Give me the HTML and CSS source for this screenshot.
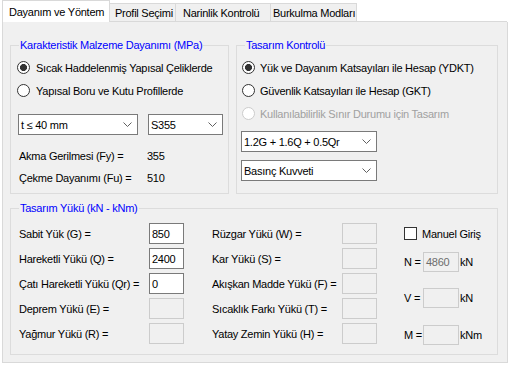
FILE: index.html
```html
<!DOCTYPE html>
<html lang="tr">
<head>
<meta charset="utf-8">
<link rel="stylesheet" href="styles.css">
</head>
<body>
<div class="tabs">
  <div class="tab active">Dayanım ve Yöntem</div>
  <div class="tab t2">Profil Seçimi</div>
  <div class="tab t3">Narinlik Kontrolü</div>
  <div class="tab t4">Burkulma Modları</div>
  <div class="tab-fill"></div>
</div>
<div class="page">
  <div class="top">
    <fieldset class="group g1">
      <legend>Karakteristik Malzeme Dayanımı (MPa)</legend>
      <div class="radios">
        <div class="opt"><span class="radio on"></span>Sıcak Haddelenmiş Yapısal Çeliklerde</div>
        <div class="opt"><span class="radio"></span>Yapısal Boru ve Kutu Profillerde</div>
      </div>
      <div class="combos">
        <div class="combo c-thick">t ≤ 40 mm<svg width="9" height="5" viewBox="0 0 9 5"><path d="M0.5 0.5 L4.5 4.5 L8.5 0.5" fill="none" stroke="#606060"/></svg></div>
        <div class="combo c-steel">S355<svg width="9" height="5" viewBox="0 0 9 5"><path d="M0.5 0.5 L4.5 4.5 L8.5 0.5" fill="none" stroke="#606060"/></svg></div>
      </div>
      <div class="props">
        <span>Akma Gerilmesi (Fy) =</span><span>355</span>
        <span>Çekme Dayanımı (Fu) =</span><span>510</span>
      </div>
    </fieldset>
    <fieldset class="group g2">
      <legend>Tasarım Kontrolü</legend>
      <div class="radios">
        <div class="opt"><span class="radio on"></span>Yük ve Dayanım Katsayıları ile Hesap (YDKT)</div>
        <div class="opt"><span class="radio"></span>Güvenlik Katsayıları ile Hesap (GKT)</div>
        <div class="opt disabled"><span class="radio"></span>Kullanılabilirlik Sınır Durumu için Tasarım</div>
      </div>
      <div class="combo c-combo">1.2G + 1.6Q + 0.5Qr<svg width="9" height="5" viewBox="0 0 9 5"><path d="M0.5 0.5 L4.5 4.5 L8.5 0.5" fill="none" stroke="#606060"/></svg></div>
      <div class="combo c-force">Basınç Kuvveti<svg width="9" height="5" viewBox="0 0 9 5"><path d="M0.5 0.5 L4.5 4.5 L8.5 0.5" fill="none" stroke="#606060"/></svg></div>
    </fieldset>
  </div>
  <fieldset class="group g3">
    <legend>Tasarım Yükü (kN - kNm)</legend>
    <div class="loads">
      <div class="load-grid">
        <span class="lbl">Sabit Yük (G) =</span><div class="field">850</div>
        <span class="lbl">Hareketli Yükü (Q) =</span><div class="field">2400</div>
        <span class="lbl">Çatı Hareketli Yükü (Qr) =</span><div class="field">0</div>
        <span class="lbl">Deprem Yükü (E) =</span><div class="field off"></div>
        <span class="lbl">Yağmur Yükü (R) =</span><div class="field off"></div>
      </div>
      <div class="load-grid col2">
        <span class="lbl">Rüzgar Yükü (W) =</span><div class="field off"></div>
        <span class="lbl">Kar Yükü (S) =</span><div class="field off"></div>
        <span class="lbl">Akışkan Madde Yükü (F) =</span><div class="field off"></div>
        <span class="lbl">Sıcaklık Farkı Yükü (T) =</span><div class="field off"></div>
        <span class="lbl">Yatay Zemin Yükü (H) =</span><div class="field off"></div>
      </div>
      <div class="forces">
        <div class="manual"><span class="check"></span>Manuel Giriş</div>
        <div class="force f-n"><span>N =</span><div class="field off sm grey">4860</div><span class="unit">kN</span></div>
        <div class="force f-v"><span>V =</span><div class="field off sm"></div><span class="unit">kN</span></div>
        <div class="force f-m"><span>M =</span><div class="field off sm"></div><span class="unit">kNm</span></div>
      </div>
    </div>
  </fieldset>
</div>
</body>
</html>
```

FILE: styles.css
```css
* { box-sizing: border-box; }

html, body {
  margin: 0;
  padding: 0;
  background: #ffffff;
}

body {
  width: 510px;
  height: 366px;
  overflow: hidden;
  font-family: "Liberation Sans", Arial, sans-serif;
  font-size: 11px;
  letter-spacing: -0.25px;
  color: #000000;
}

/* ---------- tabs ---------- */
.tabs {
  display: flex;
  align-items: flex-end;
  height: 22px;
  margin: 0 3px 0 2px;
}

.tab {
  height: 19px;
  line-height: 18px;
  padding: 0 0 0 5px;
  background: #f0f0f0;
  border: 1px solid #d9d9d9;
  border-left: none;
  white-space: nowrap;
}

.tab.active {
  height: 22px;
  line-height: 22px;
  width: 108px;
  padding-left: 6px;
  background: #ffffff;
  border-left: 1px solid #d9d9d9;
  border-bottom: none;
}

.t2 { width: 66px; padding-left: 5px; }
.t3 { width: 95px; padding-left: 7px; }
.t4 { width: 86px; padding-left: 2px; }

.tab-fill {
  flex: 1;
  height: 1px;
  background: #d9d9d9;
}

/* ---------- page ---------- */
.page {
  margin-left: 2px;
  width: 506px;
  height: 341px;
  background: #f0f0f0;
  border: 1px solid #d9d9d9;
  border-top: none;
  padding: 17px 9px 7px 7px;
  display: flex;
  flex-direction: column;
  gap: 8px;
}

.top {
  display: flex;
  gap: 7px;
}

/* ---------- group boxes ---------- */
.group {
  margin: 0;
  padding: 0;
  min-width: 0;
  border: 1px solid #dcdcdc;
}

.group legend {
  margin-left: 8px;
  padding: 0 1px;
  line-height: 13px;
  color: #0000ff;
}

.g1 { width: 219px; height: 155px; }
.g2 { width: 262px; height: 155px; }
.g3 { width: 488px; height: 153px; }

/* ---------- radios ---------- */
.radios {
  padding-top: 4px;
}

.g1 .radios { padding-left: 6px; }
.g2 .radios { padding-left: 5px; }

.opt {
  height: 23px;
  display: flex;
  align-items: center;
  gap: 6px;
  white-space: nowrap;
}

.g2 .opt { gap: 5px; }

.radio {
  width: 13px;
  height: 13px;
  border-radius: 50%;
  border: 1px solid #333333;
  background: #ffffff;
  flex: none;
}

.radio.on {
  background: radial-gradient(circle, #333333 0 3.2px, #ffffff 3.8px);
}

.opt.disabled { color: #a0a0a0; }
.opt.disabled .radio { border-color: #cccccc; }

/* ---------- combos ---------- */
.combos {
  display: flex;
  gap: 10px;
  margin: 12px 0 0 7px;
}

.combo {
  height: 21px;
  display: flex;
  align-items: center;
  justify-content: space-between;
  padding: 0 5px 0 2px;
  background: #ffffff;
  border: 1px solid #7a7a7a;
  white-space: nowrap;
}

.c-thick { width: 120px; }
.c-steel { width: 75px; }

.c-combo {
  width: 136px;
  margin: 6px 0 0 4px;
}

.c-force {
  width: 136px;
  margin: 8px 0 0 4px;
}

/* ---------- properties ---------- */
.props {
  display: grid;
  grid-template-columns: 128px auto;
  grid-auto-rows: 22px;
  align-items: center;
  margin-top: 10px;
  padding-left: 8px;
}

/* ---------- loads ---------- */
.loads {
  display: flex;
  align-items: flex-start;
  padding: 8px 0 0 8px;
}

.load-grid {
  display: grid;
  grid-template-columns: 130px 35px;
  grid-auto-rows: 21px;
  row-gap: 4px;
  align-items: center;
}

.load-grid.col2 { margin-left: 28px; }

.lbl { white-space: nowrap; }

.field {
  height: 21px;
  padding-left: 2px;
  display: flex;
  align-items: center;
  background: #ffffff;
  border: 1px solid #7a7a7a;
}

.field.off {
  background: #f0f0f0;
  border-color: #cccccc;
}

.field.sm {
  height: 20px;
  width: 36px;
}

.field.grey { color: #6d6d6d; }

.forces {
  margin-left: 27px;
  display: flex;
  flex-direction: column;
}

.manual {
  height: 21px;
  display: flex;
  align-items: center;
  gap: 5px;
  white-space: nowrap;
}

.check {
  width: 13px;
  height: 13px;
  border: 1px solid #333333;
  background: #ffffff;
  flex: none;
}

.force {
  display: grid;
  grid-template-columns: 19px 36px auto;
  align-items: center;
  height: 20px;
  white-space: nowrap;
}

.f-n { margin-top: 8px; }
.f-v { margin-top: 16px; }
.f-m { margin-top: 17px; }

.unit { padding-left: 1px; }
```
